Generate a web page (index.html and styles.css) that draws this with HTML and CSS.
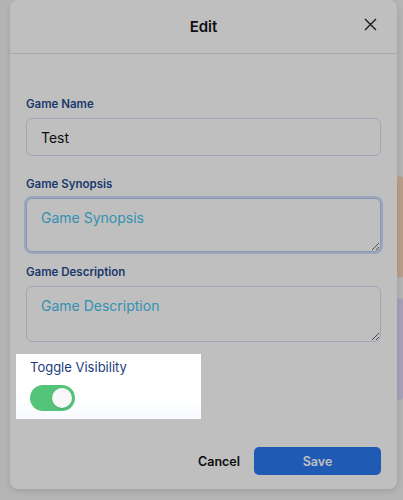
FILE: index.html
```html
<!DOCTYPE html>
<html lang="en">
<head>
  <meta charset="UTF-8" />
  <meta name="viewport" content="width=device-width, initial-scale=1.0"/>
  <title>Edit Game</title>
  <link rel="stylesheet" href="styles.css">
</head>
<body>
  <div class="game-list">
    <div class="game-card peach"></div>
    <div class="game-card lavender"></div>
  </div>

  <div class="modal">
    <div class="modal-header">
      <h2>Edit</h2>
      <button class="close-btn" aria-label="Close">
        <svg width="13" height="13" viewBox="0 0 13 13"><path d="M1 1L12 12M12 1L1 12" stroke="#222" stroke-width="1.4" fill="none"/></svg>
      </button>
    </div>

    <div class="modal-body">
      <div class="field name-field">
        <label>Game Name</label>
        <input type="text" value="Test" />
      </div>
      <div class="field">
        <label>Game Synopsis</label>
        <textarea class="synopsis is-focused" placeholder="Game Synopsis"></textarea>
      </div>
      <div class="field">
        <label>Game Description</label>
        <textarea class="description" placeholder="Game Description"></textarea>
      </div>
      <div class="toggle-field">
        <div class="toggle-label">Toggle Visibility</div>
        <div class="switch on"><span class="knob"></span></div>
      </div>
    </div>

    <div class="modal-footer">
      <button class="cancel-btn">Cancel</button>
      <button class="save-btn">Save</button>
    </div>
  </div>

  <!-- tour overlay, the highlighted field sits above it -->
  <div class="tour-overlay"></div>
</body>
</html>
```

FILE: styles.css
```css
body {
  margin: 0;
  font-family: 'Inter', 'Noto Sans', sans-serif;
  background: #f1f1f1;
  height: 500px;
  overflow: hidden;
}
.game-list {
  margin-left: 397px;
  padding-top: 176px;
  display: flex;
  flex-direction: column;
  gap: 20px;
}
.game-card { height: 102px; border-radius: 6px; }
.game-card.peach { background: #f6d3b8; }
.game-card.lavender { background: #dcd6f6; }

.tour-overlay {
  position: fixed;
  inset: 0;
  background: rgba(0, 0, 0, 0.25);
  z-index: 5;
}

.modal {
  position: absolute;
  top: 0;
  left: 10px;
  width: 387px;
  background: #fff;
  border-radius: 8px;
  box-shadow: 0 2px 6px rgba(0, 0, 0, 0.12);
}
.modal-header {
  height: 53px;
  border-bottom: 1px solid #dde4f1;
  display: flex;
  align-items: center;
  justify-content: center;
  position: relative;
}
.modal-header h2 {
  margin: 0;
  font-size: 15px;
  font-weight: 600;
  color: #151515;
}
.close-btn {
  position: absolute;
  right: 20px;
  top: 18px;
  background: none;
  border: none;
  padding: 0;
  width: 13px;
  height: 13px;
  display: flex;
}

.modal-body {
  padding: 42px 16px 0;
}
.field {
  display: flex;
  flex-direction: column;
  margin-bottom: 12px;
}
.field.name-field { margin-bottom: 20px; }
.field label {
  font-size: 11.5px;
  line-height: 16px;
  font-weight: 600;
  color: #274e92;
  margin-bottom: 6px;
}
input, textarea {
  font-family: 'Inter', 'Noto Sans', sans-serif;
  font-size: 14px;
  color: #141414;
  border: 1px solid #d4def3;
  border-radius: 6px;
  padding: 0 14px;
  box-sizing: border-box;
  outline: none;
  background: #fff;
}
input { height: 38px; }
textarea {
  padding-top: 10px;
  resize: vertical;
}
textarea::placeholder { color: #45c3ee; }
.synopsis { height: 54px; }
.synopsis.is-focused {
  border-color: #b6cdf8;
  box-shadow: 0 0 0 2px rgba(160, 190, 245, 0.5);
}
.description { height: 56px; }

.toggle-field {
  position: relative;
  z-index: 10;
  width: 185px;
  box-sizing: border-box;
  margin: 11px 0 0 -10px;
  padding: 5px 14px 8px;
  background: linear-gradient(#fff 70%, #f6f9ff);
}
.toggle-label {
  font-size: 13px;
  line-height: 16px;
  color: #1c3c7c;
  margin-bottom: 10px;
}
.switch {
  width: 45px;
  height: 26px;
  border-radius: 13px;
  background: #c9c9c9;
  display: flex;
  align-items: center;
  padding: 3px;
  box-sizing: border-box;
}
.switch.on {
  background: #55c47b;
  justify-content: flex-end;
}
.knob {
  width: 20px;
  height: 20px;
  border-radius: 50%;
  background: #f8f8f8;
  box-shadow: 0 1px 2px rgba(0, 0, 0, 0.15);
}

.modal-footer {
  display: flex;
  justify-content: flex-end;
  align-items: center;
  gap: 4px;
  padding: 28px 16px 14px;
}
button { font-family: 'Inter', 'Noto Sans', sans-serif; cursor: pointer; }
.cancel-btn {
  background: none;
  border: none;
  font-size: 12.5px;
  font-weight: 600;
  color: #111;
  padding: 0 10px;
  height: 28px;
}
.save-btn {
  width: 127px;
  height: 28px;
  border: none;
  border-radius: 5px;
  background: #2a79f2;
  color: #fff;
  font-size: 12.5px;
  font-weight: 600;
}
```
